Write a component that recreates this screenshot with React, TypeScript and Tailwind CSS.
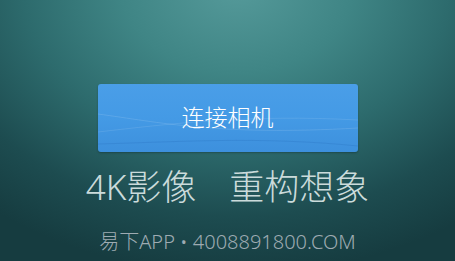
import React from "react";

const font = { fontFamily: '"Noto Sans", "Noto Sans CJK SC", sans-serif' };

function ConnectButton() {
  return (
    <button className="relative flex h-[68px] w-[260px] items-center justify-center overflow-hidden rounded-[3px] bg-[linear-gradient(180deg,#4a9ee8_0%,#449ae5_50%,#3d90dd_100%)] shadow-[0_1px_2px_rgba(0,0,0,0.25)]">
      <svg className="absolute inset-0" width="260" height="68" viewBox="0 0 260 68" fill="none">
        <path d="M0 30 C 60 38, 120 52, 260 44" stroke="rgba(255,255,255,0.12)" strokeWidth="1" />
        <path d="M0 48 C 70 40, 150 30, 260 36" stroke="rgba(255,255,255,0.10)" strokeWidth="1" />
        <path d="M0 60 C 80 58, 160 52, 260 62" stroke="rgba(20,80,160,0.15)" strokeWidth="1" />
      </svg>
      <span className="relative -mt-[2px] text-[23px] font-light leading-none text-white" style={font}>
        连接相机
      </span>
    </button>
  );
}

export default function App() {
  return (
    <div
      className="flex h-[261px] w-[455px] flex-col items-center overflow-hidden bg-[radial-gradient(ellipse_85%_110%_at_52%_-5%,#559a9a_0%,#3f8585_30%,#2d6b6d_55%,#1d4c50_80%,#163c40_100%)]"
      style={font}
    >
      <div className="mt-[84px]">
        <ConnectButton />
      </div>
      <div className="mt-[17px] flex items-center gap-[33px] text-[35px] font-light leading-none text-[#cbdbdb]">
        <span>4K影像</span>
        <span>重构想象</span>
      </div>
      <div className="mt-[28px] text-[20px] font-light leading-none text-[#9eabb2]">
        易下APP • 4008891800.COM
      </div>
    </div>
  );
}
